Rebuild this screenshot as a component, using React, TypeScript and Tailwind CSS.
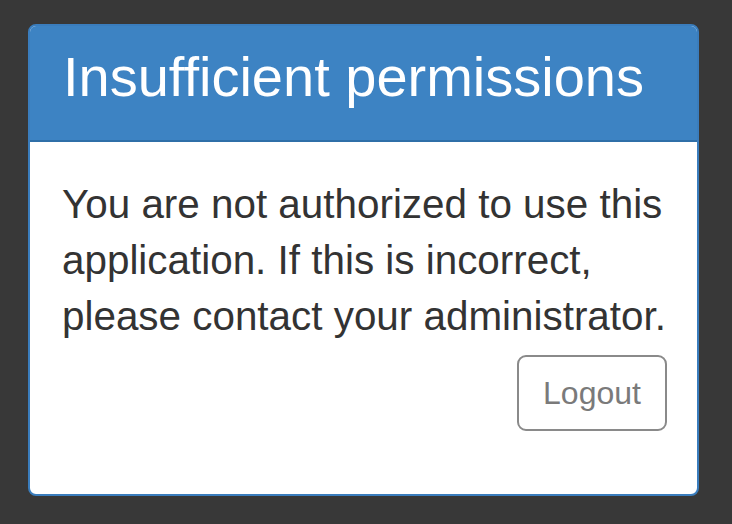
export default function App() {
  return (
    <div
      className="w-[732px] h-[524px] bg-[#383838] pt-[24px] pl-[28px]"
      style={{ fontFamily: '"Liberation Sans", Arial, sans-serif' }}
    >
      <div className="w-[671px] h-[472px] border-2 border-[#3a7dbd] rounded-[8px] bg-white overflow-hidden flex flex-col">
        <div className="h-[116px] bg-[#3d83c3] border-b-2 border-[#2f6fa8] pl-[33px] pr-[30px] pt-[20px]">
          <h3 className="text-[56px] leading-[1.1] text-white m-0">Insufficient permissions</h3>
        </div>
        <div className="pl-[32px] pr-[30px] pt-[34px]">
          <p className="text-[40.4px] leading-[56px] text-[#333333]">
            You are not authorized to use this application. If this is incorrect, please contact your administrator.
          </p>
          <div className="flex justify-end mt-[11px]">
            <button className="w-[150px] h-[76px] border-2 border-[#8a8a8a] rounded-[9px] bg-white text-[32px] text-[#7a7a7a] flex items-center justify-center">
              Logout
            </button>
          </div>
        </div>
      </div>
    </div>
  );
}
